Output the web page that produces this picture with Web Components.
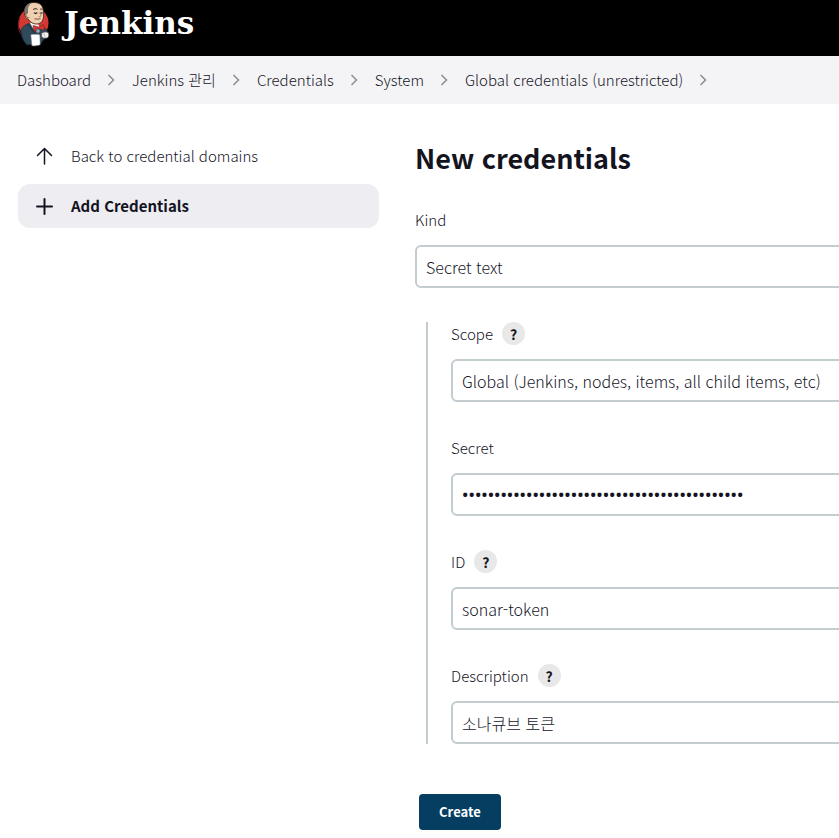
<!DOCTYPE html>
<html lang="ko">
<head>
<meta charset="utf-8">
<meta name="viewport" content="width=device-width, initial-scale=1">
<title>New credentials [Jenkins]</title>
<style>
  :root {
    --text: #14141f;
    --line: #c3cccf;
    --sans: "Noto Sans CJK KR", "Noto Sans", sans-serif;
  }
  body {
    margin: 0;
    background: #fff;
    color: var(--text);
    font: 300 15px/22px var(--sans);
  }
</style>
</head>
<body>
<jenkins-page>
  <jenkins-header slot="header"></jenkins-header>
  <jenkins-breadcrumbs slot="crumbs">
    <jenkins-crumb>Dashboard</jenkins-crumb>
    <jenkins-crumb>Jenkins 관리</jenkins-crumb>
    <jenkins-crumb>Credentials</jenkins-crumb>
    <jenkins-crumb>System</jenkins-crumb>
    <jenkins-crumb>Global credentials (unrestricted)</jenkins-crumb>
  </jenkins-breadcrumbs>
  <jenkins-tasks slot="side">
    <jenkins-task icon="up">Back to credential domains</jenkins-task>
    <jenkins-task icon="plus" active>Add Credentials</jenkins-task>
  </jenkins-tasks>
  <credentials-form>
    <jenkins-field label="Kind" kind="select" value="Secret text"></jenkins-field>
    <jenkins-group>
      <jenkins-field label="Scope" kind="select" value="Global (Jenkins, nodes, items, all child items, etc)" help></jenkins-field>
      <jenkins-field label="Secret" kind="password" value="00000000000000000000000000000000000000000000"></jenkins-field>
      <jenkins-field label="ID" kind="text" value="sonar-token" help></jenkins-field>
      <jenkins-field label="Description" kind="text" value="소나큐브 토큰" help></jenkins-field>
    </jenkins-group>
  </credentials-form>
</jenkins-page>

<script>
const define = (name, html, setup) => {
  const template = document.createElement('template');
  template.innerHTML = html;
  customElements.define(name, class extends HTMLElement {
    constructor() {
      super();
      this.attachShadow({ mode: 'open' }).append(template.content.cloneNode(true));
    }
    connectedCallback() {
      if (setup) setup(this, this.shadowRoot);
    }
  });
};

define('jenkins-page', `
  <style>
    :host { display: block; min-height: 100vh; overflow-x: clip; }
    .body {
      display: grid;
      grid-template-columns: 46fr 54fr;
      gap: 36px;
      padding: 30px 0 8px 18px;
    }
    main { min-width: 0; }
  </style>
  <slot name="header"></slot>
  <slot name="crumbs"></slot>
  <div class="body">
    <slot name="side"></slot>
    <main><slot></slot></main>
  </div>`);

define('jenkins-header', `
  <style>
    :host { display: block; background: #000; color: #fff; }
    header { display: flex; height: 56px; }
    a { display: flex; gap: 12px; padding-left: 16px; color: inherit; text-decoration: none; }
    svg { display: block; width: 36px; height: 48px; }
    span { font: bold 31px/46px "DejaVu Serif", serif; }
  </style>
  <header>
    <a href="#">
      <svg viewBox="0 0 36 48" aria-hidden="true">
        <ellipse cx="17.500" cy="23" rx="15" ry="15.500" fill="#d33833"/>
        <path d="M5 34C2 30 1.500 24 4 18" fill="none" stroke="#8b2420" stroke-width="1"/>
        <path d="M5 30c2-4 5-5.500 8-6.500l9 3 6 1c3 2 4 4 4 8l-5 5-2 3-14 1.500C7 41 5 36 5 30z" fill="#2f4a5b" stroke="#1b2a35" stroke-width=".8"/>
        <path d="M13.500 22.500l4 6.500 4 1 3-1.500-2-4z" fill="#f4f4f4"/>
        <path d="M12.500 24.500l7 10" fill="none" stroke="#18262f" stroke-width=".8"/>
        <path d="M8.500 11C9 5.500 12.500 2.500 18 2.500c6 0 8.800 3 9.300 8 .3 3 .5 6-.2 8.500-1 3.500-3.500 5-6.600 5-3 0-6-1.500-7.500-4C10 18.500 8 15.500 8.500 11z" fill="#efd0b0" stroke="#33261f" stroke-width=".8"/>
        <path d="M8.500 12C8 7 11.500 3 15.500 2.700c-2.500 2.300-3.500 4.300-3.500 7.300v4l.5 4.500c-2-1-3.500-3.500-4-6.500z" fill="#77736e"/>
        <path d="M12 13c-2-.5-2.500 1.500-1.500 3.200s2 2 3 1.300" fill="#efd0b0" stroke="#5b4333" stroke-width=".6"/>
        <path d="M17 9.800c1-1.200 3-1.500 4.500-.5M24 9.500c.8-.6 1.600-.6 2.400 0" fill="none" stroke="#33261f" stroke-width="1"/>
        <path d="M18 12.800c1 .6 2.200.6 3.300.1M24.300 12.800c.8.500 1.500.5 2.300 0" fill="none" stroke="#222" stroke-width="1.200"/>
        <path d="M23.300 12.500c1 1.500 2 2.500 1.600 3.500-.5.900-1.500.9-2.300.5" fill="none" stroke="#9b6e52" stroke-width=".8"/>
        <path d="M18.500 18.800c2.500.5 4.500.3 6-.2" fill="none" stroke="#7d4435" stroke-width="1"/>
        <path d="M17 25.500l5.500 1.500 5-2.500 1 5.500-5-1-5 3z" fill="#d33833" stroke="#811c1a" stroke-width=".6"/>
        <circle cx="22" cy="31" r="2.200" fill="#8fa9b8" stroke="#1b2a35" stroke-width=".6"/>
        <path d="M14.800 34.800c3-.6 6-.6 9 0l.4 10c-2.500 1-5.800 1.400-8.300 1z" fill="#fff" stroke="#777" stroke-width=".5"/>
        <path d="M25.500 33.500c2-1.800 4.500-2 6.800-.8.800 1.500.3 4-.5 5-2 .8-4.500.5-6-.5z" fill="#f3f3f3" stroke="#555" stroke-width=".7"/>
        <path d="M28 33.500l1 3" stroke="#888" stroke-width=".6"/>
      </svg>
      <span>Jenkins</span>
    </a>
  </header>`);

define('jenkins-breadcrumbs', `
  <style>
    :host { display: block; background: #f4f4f7; }
    nav { display: flex; align-items: center; height: 48px; padding-left: 17px; white-space: nowrap; }
  </style>
  <nav aria-label="Breadcrumbs"><slot></slot></nav>`);

define('jenkins-crumb', `
  <style>
    :host { display: flex; align-items: center; }
    a { color: inherit; text-decoration: none; }
    svg { width: 8px; height: 12px; margin: 0 17px 0 16px; fill: none; stroke: #8c8c94; stroke-width: 1.5; }
  </style>
  <a href="#"><slot></slot></a>
  <svg viewBox="0 0 8 12" aria-hidden="true"><path d="M1.500 1L6.500 6L1.500 11"/></svg>`);

define('jenkins-tasks', `
  <style>
    :host { display: block; }
    nav { display: grid; gap: 6px; }
  </style>
  <nav aria-label="Tasks"><slot></slot></nav>`);

define('jenkins-task', `
  <style>
    :host { display: block; border-radius: 12px; }
    :host([active]) { background: #ededf2; font-weight: 600; }
    a {
      display: flex; align-items: center; gap: 17px;
      min-height: 44px; padding: 0 17px;
      color: inherit; text-decoration: none;
    }
    svg { width: 19px; height: 19px; fill: none; stroke: #14141f; stroke-width: 2; stroke-linecap: round; stroke-linejoin: round; }
  </style>
  <a href="#">
    <svg viewBox="0 0 19 19" aria-hidden="true"><path/></svg>
    <slot></slot>
  </a>`, (host, root) => {
  const up = host.getAttribute('icon') === 'up';
  root.querySelector('path').setAttribute('d', up
    ? 'M9.500 17V2M2.500 8.500L9.500 1.500L16.500 8.500'
    : 'M9.500 2V17M2 9.500H17');
  root.querySelector('svg').style.strokeWidth = up ? '1.500' : '2';
});

define('credentials-form', `
  <style>
    :host { display: block; }
    h1 { margin: 0 0 30px; padding-top: 4px; font: 700 27px/40px var(--sans); }
    form { display: grid; gap: 34px; margin-right: -24px; }
    button {
      justify-self: start;
      height: 36px; padding: 0 20px; margin: 16px 0 0 4px;
      border: 0; border-radius: 4px;
      background: #063e62; color: #fff;
      font: 700 13px/20px var(--sans);
    }
  </style>
  <h1>New credentials</h1>
  <form>
    <slot></slot>
    <button type="button">Create</button>
  </form>`);

define('jenkins-group', `
  <style>
    :host {
      display: grid; gap: 34px;
      margin-left: 11px; padding-left: 23px;
      border-left: 2px solid var(--line);
    }
  </style>
  <slot></slot>`);

define('jenkins-field', `
  <style>
    :host { display: block; }
    .head { display: flex; align-items: center; gap: 9px; height: 23px; margin-bottom: 14px; }
    .head button {
      width: 23px; height: 23px; padding: 0;
      border: 0; border-radius: 50%;
      background: #e8e8e8; color: var(--text);
      font: 700 14px/22px var(--sans);
    }
    input, select {
      display: block; box-sizing: border-box;
      width: 100%; height: 43px; margin: 0; padding: 0 9px;
      border: 2px solid var(--line); border-radius: 6px;
      background: #fff; color: inherit; font: inherit; font-size: 16px;
      appearance: none; outline: 0;
    }
    input[type=password] { font: 500 17px/24px "Noto Sans", sans-serif; }
  </style>
  <div class="head"><label for="control"></label></div>`, (host, root) => {
  if (root.querySelector('#control')) return;
  const { kind, label, value } = Object.fromEntries(
    ['kind', 'label', 'value'].map(n => [n, host.getAttribute(n)]));
  root.querySelector('label').textContent = label;
  if (host.hasAttribute('help')) {
    const help = document.createElement('button');
    help.type = 'button';
    help.textContent = '?';
    help.setAttribute('aria-label', 'Help for feature: ' + label);
    root.querySelector('.head').append(help);
  }
  const control = document.createElement(kind === 'select' ? 'select' : 'input');
  control.id = 'control';
  if (kind === 'select') {
    control.add(new Option(value));
  } else {
    control.type = kind;
    control.value = value;
  }
  root.append(control);
});
</script>
</body>
</html>
